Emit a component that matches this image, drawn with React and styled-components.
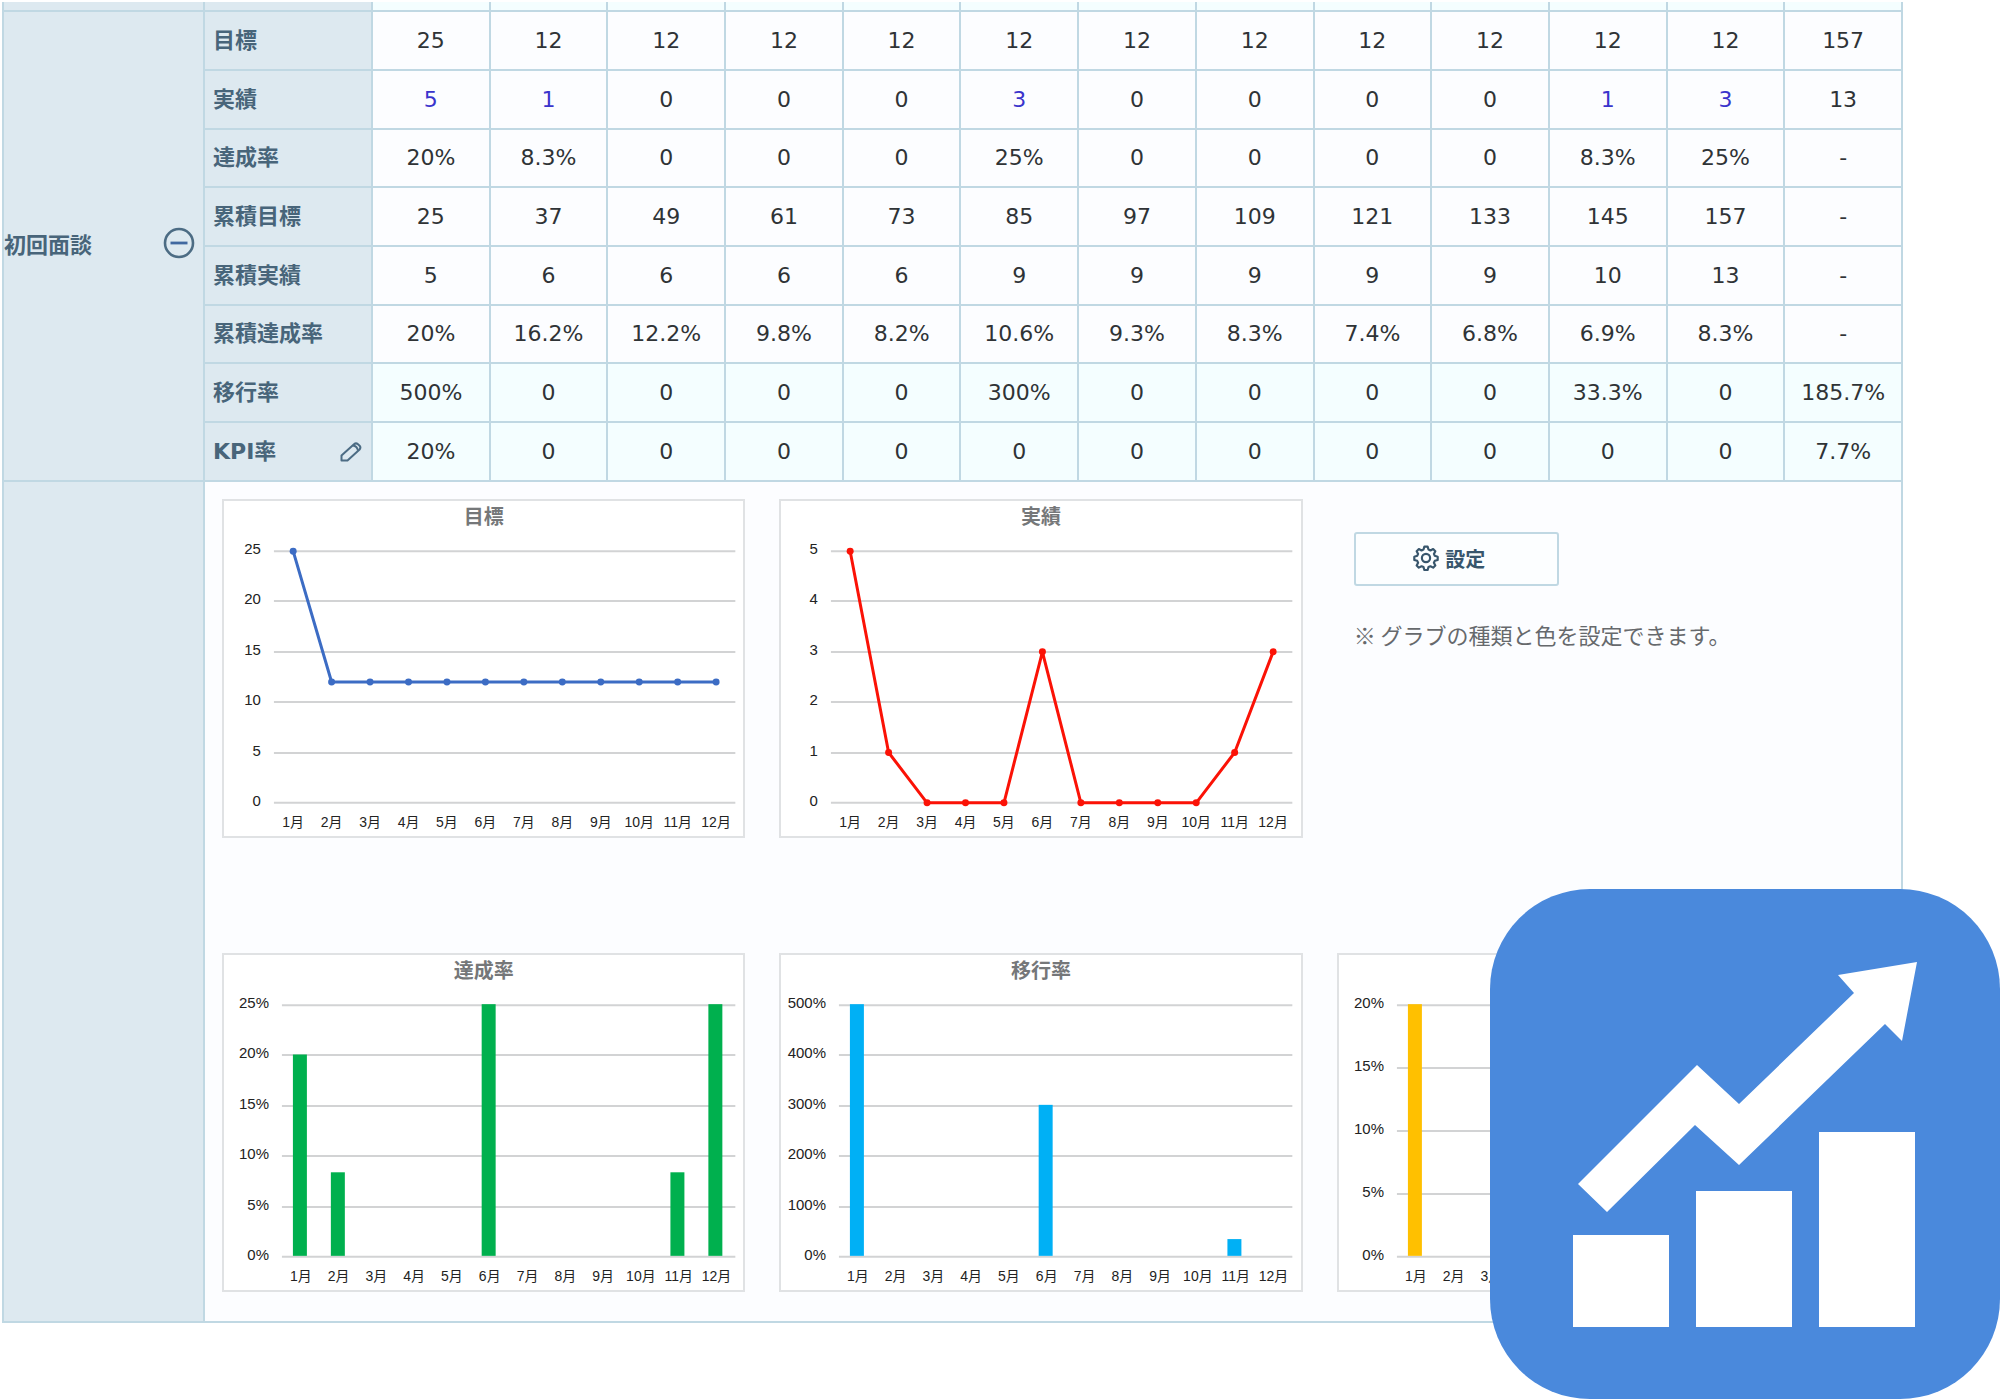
import React from 'react'
import styled, { createGlobalStyle } from 'styled-components'

const GlobalStyle = createGlobalStyle`
    * {
        box-sizing: border-box;
    }
    body {
        margin: 0;
        background-color: #ffffff;
        font-family: "DejaVu Sans", "Noto Sans CJK JP", sans-serif;
    }
`;

const Page = styled.main`
    position: relative;
    min-height: 100vh;
    padding: 2px 97px 76px 2px;
`;

const Table = styled.table`
    width: 100%;
    table-layout: fixed;
    border-collapse: separate;
    border-spacing: 0;
    border-left: 2px solid #c0d8e3;
    font-size: 22px;
    line-height: 30px;
    color: #2f3336;
`;

const GroupCol = styled.col`
    width: 201px;
`;

const LabelCol = styled.col`
    width: 168px;
`;

const Row = styled.tr`
    height: 59px;
    background-color: ${props=>props.$tinted ? "#f4feff" : "#fcfdff"};
    &:nth-child(3n + 1) {
        height: 58px;
    }
    &:first-child {
        height: 10px;
    }
`;

const Cell = styled.td`
    padding: 0;
    text-align: center;
    border-right: 2px solid #c0d8e3;
    border-bottom: 2px solid #c0d8e3;
`;

const HeadCell = styled.th`
    padding: 0 8px;
    text-align: left;
    font-weight: 700;
    color: #48657a;
    background-color: #dde9f0;
    border-right: 2px solid #c0d8e3;
    border-bottom: 2px solid #c0d8e3;
`;

const GroupCell = styled(HeadCell)`
    padding: 0 8px 0 0;
`;

const HeadContent = styled.div`
    display: flex;
    align-items: center;
    justify-content: space-between;
`;

const IconButton = styled.button`
    display: flex;
    padding: 0;
    border: none;
    background: none;
    color: #4c6c84;
    cursor: pointer;
`;

const ToggleButton = styled(IconButton)`
    padding-bottom: 6px;
`;

const ValueLink = styled.a`
    color: #3a34cc;
    text-decoration: none;
`;

const ChartArea = styled.div`
    display: grid;
    grid-template-columns: repeat(3, 1fr);
    gap: 115px 34px;
    padding: 17px 41px 29px 17px;
    text-align: left;
`;

const ChartCard = styled.figure`
    margin: 0;
    border: 2px solid #e0e2e4;
    background-color: #ffffff;
`;

const ChartTitle = styled.figcaption`
    text-align: center;
    font-size: 20px;
    line-height: 32px;
    font-weight: 700;
    color: #757779;
`;

const Plot = styled.svg`
    display: block;
    width: 100%;
    height: 303px;
    font-family: "Liberation Sans", "Noto Sans CJK JP", sans-serif;
    fill: #222222;
`;

const AxisLabel = styled.text`
    font-size: 15px;
    text-anchor: end;
`;

const MonthLabel = styled.text`
    font-size: 14px;
    text-anchor: middle;
`;

const Side = styled.div`
    padding: 33px 17px;
`;

const SettingButton = styled.button`
    display: flex;
    align-items: center;
    justify-content: center;
    gap: 6px;
    width: 205px;
    height: 54px;
    padding: 0 14px 2px 0;
    border: 2px solid #c0d8e3;
    border-radius: 3px;
    background-color: #fcfeff;
    font-family: inherit;
    font-size: 20px;
    font-weight: 700;
    color: #38566c;
    cursor: pointer;
`;

const Note = styled.p`
    margin: 32px 0 0;
    font-family: "Noto Sans CJK JP", sans-serif;
    font-size: 22px;
    line-height: 32px;
    color: #66696c;
    white-space: nowrap;
`;

const Badge = styled.div`
    position: absolute;
    right: 0;
    bottom: 0;
    width: 510px;
    height: 510px;
    border-radius: 100px;
    background-color: #4a89dc;
`;

const months = ["1月", "2月", "3月", "4月", "5月", "6月", "7月", "8月", "9月", "10月", "11月", "12月"];

const rows = [
    { label: "目標", values: ["25", "12", "12", "12", "12", "12", "12", "12", "12", "12", "12", "12", "157"] },
    { label: "実績", linked: true, values: ["5", "1", "0", "0", "0", "3", "0", "0", "0", "0", "1", "3", "13"] },
    { label: "達成率", values: ["20%", "8.3%", "0", "0", "0", "25%", "0", "0", "0", "0", "8.3%", "25%", "-"] },
    { label: "累積目標", values: ["25", "37", "49", "61", "73", "85", "97", "109", "121", "133", "145", "157", "-"] },
    { label: "累積実績", values: ["5", "6", "6", "6", "6", "9", "9", "9", "9", "9", "10", "13", "-"] },
    { label: "累積達成率", values: ["20%", "16.2%", "12.2%", "9.8%", "8.2%", "10.6%", "9.3%", "8.3%", "7.4%", "6.8%", "6.9%", "8.3%", "-"] },
    { label: "移行率", tinted: true, values: ["500%", "0", "0", "0", "0", "300%", "0", "0", "0", "0", "33.3%", "0", "185.7%"] },
    { label: "KPI率", tinted: true, editable: true, values: ["20%", "0", "0", "0", "0", "0", "0", "0", "0", "0", "0", "0", "7.7%"] },
];

const lineCharts = [
    { title: "目標", color: "#3c6cc4", max: 25, step: 5, data: [25, 12, 12, 12, 12, 12, 12, 12, 12, 12, 12, 12] },
    { title: "実績", color: "#fb1206", max: 5, step: 1, data: [5, 1, 0, 0, 0, 3, 0, 0, 0, 0, 1, 3] },
];

const barCharts = [
    { title: "達成率", color: "#00b04e", max: 25, step: 5, data: [20, 8.3, 0, 0, 0, 25, 0, 0, 0, 0, 8.3, 25] },
    { title: "移行率", color: "#00b0f5", max: 500, step: 100, data: [500, 0, 0, 0, 0, 300, 0, 0, 0, 0, 33.3, 0] },
    { title: "KPI率", color: "#ffc000", max: 20, step: 5, data: [20, 0, 0, 0, 0, 0, 0, 0, 0, 0, 0, 0] },
];

const TOP = 18;
const BOTTOM = 270;
const RIGHT = 512;

const Chart = ({title, color, max, step, data, bars}) => {
    const left = bars ? 58 : 50;
    const band = (RIGHT - left) / 12;
    const x = (i) => left + band * (i + 0.5);
    const y = (v) => BOTTOM - (v / max) * (BOTTOM - TOP);
    const ticks = Array.from({length: max / step + 1}, (_, i) => i * step);

    return (
        <ChartCard>
            <ChartTitle>{title}</ChartTitle>
            <Plot viewBox="0 0 520 303" role="img" aria-label={title}>
                {ticks.map(t => (
                    <g key={t}>
                        <line x1={left} x2={RIGHT} y1={Math.round(y(t))} y2={Math.round(y(t))} stroke="#d2d3d4" strokeWidth="2"/>
                        <AxisLabel x={left - 13} y={Math.round(y(t)) + 3}>{t}{bars ? "%" : ""}</AxisLabel>
                    </g>
                ))}
                {months.map((m, i) => <MonthLabel key={m} x={x(i)} y="294">{m}</MonthLabel>)}
                {bars && data.map((v, i) => v > 0 && (
                    <rect key={i} x={Math.round(x(i)) - 8} y={y(v) - 1} width="14" height={BOTTOM - y(v)} fill={color}/>
                ))}
                {!bars && (
                    <g fill={color}>
                        <polyline points={data.map((v, i) => `${x(i)},${y(v)}`).join(" ")} fill="none" stroke={color} strokeWidth="3" strokeLinejoin="round"/>
                        {data.map((v, i) => <circle key={i} cx={x(i)} cy={y(v)} r="3.5"/>)}
                    </g>
                )}
            </Plot>
        </ChartCard>
    )
}

const MinusIcon = () => (
    <svg width="32" height="32" viewBox="0 0 32 32" fill="none" stroke="currentColor">
        <circle cx="16" cy="16" r="14" strokeWidth="2.6"/>
        <path d="M7.500 16h17" stroke="#4068a0" strokeWidth="2.8"/>
    </svg>
)

const PencilIcon = () => (
    <svg width="24" height="24" viewBox="0 0 24 24" fill="none" stroke="currentColor" strokeWidth="2" strokeLinejoin="round">
        <path d="M2.500 20.500v-5L15 4.200q2-1.700 4 0l1.600 1.500q1.600 1.900 0 3.800L8.500 20.500z"/>
        <path d="M14 5.500q4 .5 5 5"/>
    </svg>
)

const GearIcon = () => (
    <svg width="26" height="26" viewBox="0 0 24 24" fill="none" stroke="currentColor" strokeWidth="2" strokeLinejoin="round">
        <circle cx="12" cy="12" r="3.800"/>
        <path d="M10.500 1.500h3l.8 2.700 1.800.8 2.500-1.300 2 2-1.300 2.500.8 1.800 2.700.8v3l-2.700.8-.8 1.800 1.300 2.500-2 2-2.500-1.300-1.800.8-.8 2.700h-3l-.8-2.700-1.800-.8-2.500 1.300-2-2 1.300-2.500-.8-1.800-2.700-.8v-3l2.700-.8.8-1.800-1.300-2.500 2-2 2.500 1.300 1.800-.8z"/>
    </svg>
)

const App = () => {
    return (
        <Page>
            <GlobalStyle/>
            <Table>
                <colgroup>
                    <GroupCol/>
                    <LabelCol/>
                    <col span="13"/>
                </colgroup>
                <tbody>
                    <Row $tinted>
                        <HeadCell/>
                        <HeadCell/>
                        {rows[0].values.map((_, i) => <Cell key={i}/>)}
                    </Row>
                    {rows.map((row, r) => (
                        <Row key={row.label} $tinted={row.tinted}>
                            {r === 0 && (
                                <GroupCell rowSpan={rows.length} scope="rowgroup">
                                    <HeadContent>
                                        初回面談
                                        <ToggleButton type="button" aria-label="閉じる"><MinusIcon/></ToggleButton>
                                    </HeadContent>
                                </GroupCell>
                            )}
                            <HeadCell scope="row">
                                <HeadContent>
                                    {row.label}
                                    {row.editable && <IconButton type="button" aria-label="編集"><PencilIcon/></IconButton>}
                                </HeadContent>
                            </HeadCell>
                            {row.values.map((v, i) => (
                                <Cell key={i}>
                                    {row.linked && i < 12 && v !== "0" ? <ValueLink href="#">{v}</ValueLink> : v}
                                </Cell>
                            ))}
                        </Row>
                    ))}
                    <Row>
                        <HeadCell/>
                        <Cell colSpan="14">
                            <ChartArea>
                                {lineCharts.map(c => <Chart key={c.title} {...c}/>)}
                                <Side>
                                    <SettingButton type="button"><GearIcon/>設定</SettingButton>
                                    <Note>※ グラブの種類と色を設定できます。</Note>
                                </Side>
                                {barCharts.map(c => <Chart key={c.title} {...c} bars/>)}
                            </ChartArea>
                        </Cell>
                    </Row>
                </tbody>
            </Table>
            <Badge>
                <svg width="510" height="510" viewBox="0 0 510 510" fill="#ffffff">
                    <path d="M88 295L207 176l42 39L364 104 348 86l79-13-15 79-17-17L249 276l-44-40-88 87z"/>
                    <path d="M83 346h96v92H83zM206 302h96v136h-96zM329 243h96v195h-96z"/>
                </svg>
            </Badge>
        </Page>
    )
}

export default App
